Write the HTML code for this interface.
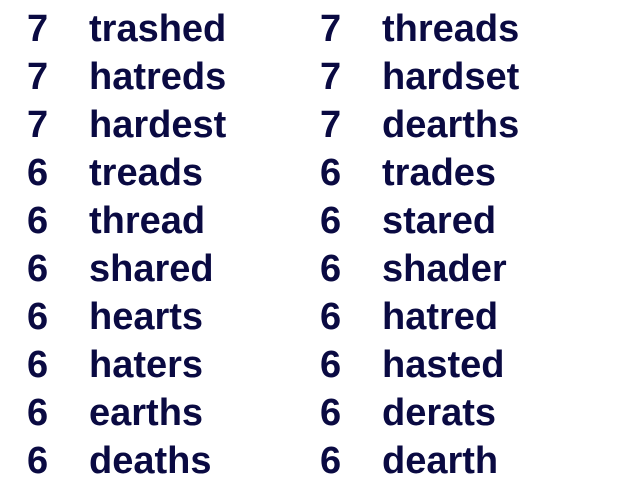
<!DOCTYPE html>
<html><head><style>
body{margin:0;width:624px;height:483px;background:#fff;overflow:hidden;position:relative;font-family:"Liberation Sans",sans-serif;font-weight:bold;font-size:38px;color:#0a0a42}
div{position:absolute;line-height:1;white-space:nowrap}
</style></head><body>
<script>
const a=[["7","trashed","7","threads"],["7","hatreds","7","hardset"],["7","hardest","7","dearths"],["6","treads","6","trades"],["6","thread","6","stared"],["6","shared","6","shader"],["6","hearts","6","hatred"],["6","haters","6","hasted"],["6","earths","6","derats"],["6","deaths","6","dearth"]];
let h="";a.forEach((r,i)=>{const t=10+i*48;[27,89,320,382].forEach((x,j)=>{h+=`<div style="left:${x}px;top:${t}px">${r[j]}</div>`})});document.write(h);
</script>
</body></html>
